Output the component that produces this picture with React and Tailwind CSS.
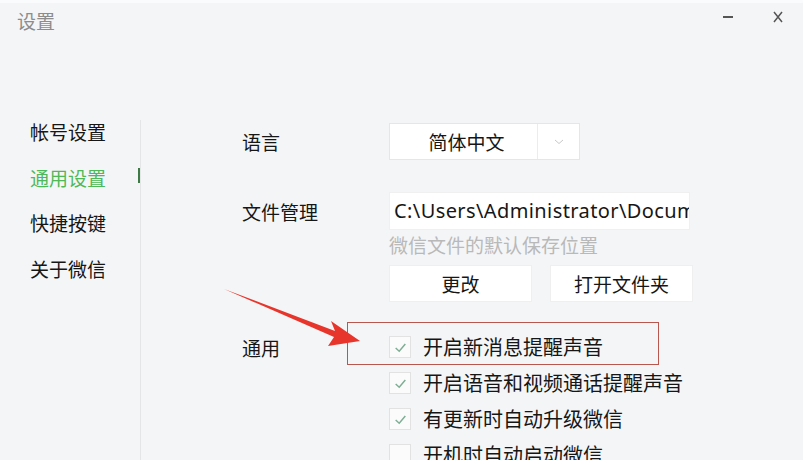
import React from "react";

const CheckRow = ({ checked, text }) => (
  <div className="flex items-center h-[36px]">
    <div className="w-[22px] h-[22px] border border-[#e2e2e2] bg-[#fbfbfb] flex items-center justify-center">
      {checked && (
        <svg width="15" height="15" viewBox="0 0 14 14">
          <path d="M2.5 7.5 L5.8 10.5 L11.5 3.8" fill="none" stroke="#7fae95" strokeWidth="1.4" />
        </svg>
      )}
    </div>
    <span className="ml-[12px] text-[20px] text-[#161616] whitespace-nowrap leading-none">{text}</span>
  </div>
);

const App = () => {
  const menu = ["帐号设置", "通用设置", "快捷按键", "关于微信"];

  return (
    <div
      className="relative w-[803px] h-[460px] overflow-hidden bg-[#f4f5f7] text-[#161616]"
      style={{ fontFamily: '"Noto Sans CJK SC", "Noto Sans", sans-serif' }}
    >
      {/* title bar */}
      <div className="flex items-center h-[44px] pl-[17px] pr-[20px] border-t-[3px] border-[#fafbfc]">
        <span className="text-[19px] text-[#8c8c8c] leading-none -mt-[6px]">设置</span>
        <div className="flex-1" />
        <div className="w-[10px] h-[2px] bg-[#555] -mt-[14px] mr-[40px]" />
        <svg width="10" height="12" viewBox="0 0 10 12" className="-mt-[14px]">
          <path d="M1 1 L9 11 M9 1 L1 11" stroke="#555" strokeWidth="1.5" />
        </svg>
      </div>

      <div className="flex h-[416px]">
        {/* sidebar */}
        <div className="w-[140px] pl-[30px] pt-[65px]">
          {menu.map((m, i) => (
            <div
              key={m}
              className={`h-[45.5px] flex items-center text-[19px] leading-none ${
                i === 1 ? "text-[#4fb857]" : "text-[#161616]"
              }`}
            >
              {m}
            </div>
          ))}
        </div>
        <div className="relative w-px mt-[76px] bg-[#e4e5e7]">
          <div className="absolute -left-[2px] top-[48px] w-[2px] h-[15px] bg-[#3d7a46]" />
        </div>

        {/* content */}
        <div className="flex-1 pl-[101px] pt-[79px]">
          <div className="flex">
            <div className="w-[147px] h-[37px] flex items-center text-[19px] leading-none">语言</div>
            <div className="flex h-[37px] w-[191px] bg-white border border-[#e6e6e6]">
              <div className="w-[147px] flex items-center justify-center text-[19px] leading-none pl-[6px]">简体中文</div>
              <div className="flex-1 border-l border-[#ececec] flex items-center justify-center">
                <svg width="10" height="6" viewBox="0 0 10 6">
                  <path d="M1 1 L5 4.5 L9 1" fill="none" stroke="#c8c8c8" strokeWidth="1" />
                </svg>
              </div>
            </div>
          </div>

          <div className="flex mt-[32px]">
            <div className="w-[147px] h-[38px] flex items-center text-[19px] leading-none">文件管理</div>
            <div className="flex flex-col">
              <div className="h-[38px] w-[301px] bg-white border border-[#f0f0f0] flex items-center pl-[4px] overflow-hidden">
                <span
                  className="text-[20px] tracking-[0.4px] whitespace-nowrap leading-none text-[#161616]"
                  style={{ fontFamily: '"Noto Sans", "Noto Sans CJK SC", sans-serif' }}
                >
                  C:\Users\Administrator\Documents\WeChat Files
                </span>
              </div>
              <div className="h-[28px] flex items-center text-[19px] leading-none text-[#b9b9b9]">微信文件的默认保存位置</div>
              <div className="flex gap-[18px] mt-[7px]">
                <div className="w-[143px] h-[37px] bg-white border border-[#efefef] flex items-center justify-center text-[19px] leading-none">更改</div>
                <div className="w-[143px] h-[37px] bg-white border border-[#efefef] flex items-center justify-center text-[19px] leading-none">打开文件夹</div>
              </div>
            </div>
          </div>

          <div className="flex mt-[27px]">
            <div className="w-[147px] h-[36px] flex items-center text-[19px] leading-none">通用</div>
            <div className="flex flex-col">
              <CheckRow checked text="开启新消息提醒声音" />
              <CheckRow checked text="开启语音和视频通话提醒声音" />
              <CheckRow checked text="有更新时自动升级微信" />
              <CheckRow checked={false} text="开机时自动启动微信" />
            </div>
          </div>
        </div>
      </div>

      {/* annotation: red box + arrow */}
      <div className="absolute left-[347px] top-[322px] w-[312px] h-[43px] border-[1.5px] border-[#b8574f]" />
      <svg className="absolute left-0 top-0" width="803" height="460" viewBox="0 0 803 460">
        <path
          d="M224 289 L335 331 L331 321 L360 341 L328 346 L334 337 Z"
          fill="#e8352c"
        />
      </svg>
    </div>
  );
};

export default App;
